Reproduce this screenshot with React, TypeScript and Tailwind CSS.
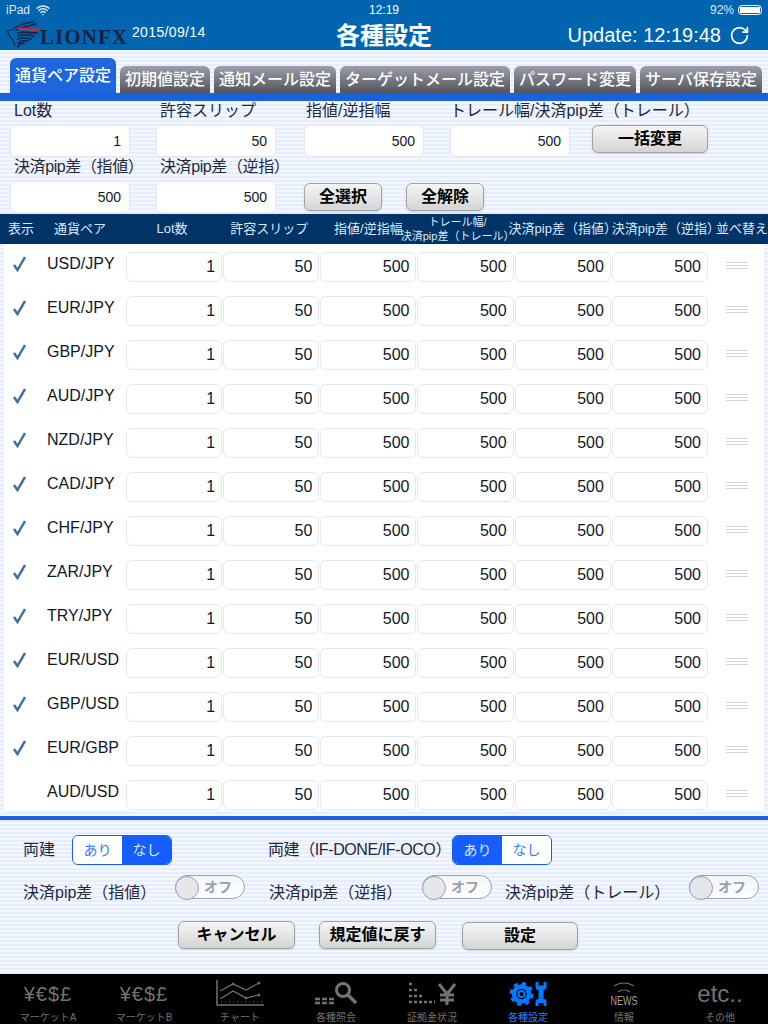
import type React from "react"
import { RotateCw, Wifi } from "lucide-react"

const stripes =
  "bg-[repeating-linear-gradient(180deg,#e6edff_0,#e6edff_2px,#f4f7ff_2px,#f4f7ff_4px)]"

const tabs = [
  { label: "初期値設定", width: "w-22.5" },
  { label: "通知メール設定", width: "w-30.5" },
  { label: "ターゲットメール設定", width: "w-42.5" },
  { label: "パスワード変更", width: "w-30.5" },
  { label: "サーバ保存設定", width: "w-30.5" },
]

const pairs = [
  { name: "USD/JPY", checked: true },
  { name: "EUR/JPY", checked: true },
  { name: "GBP/JPY", checked: true },
  { name: "AUD/JPY", checked: true },
  { name: "NZD/JPY", checked: true },
  { name: "CAD/JPY", checked: true },
  { name: "CHF/JPY", checked: true },
  { name: "ZAR/JPY", checked: true },
  { name: "TRY/JPY", checked: true },
  { name: "EUR/USD", checked: true },
  { name: "GBP/USD", checked: true },
  { name: "EUR/GBP", checked: true },
  { name: "AUD/USD", checked: false },
]

const rowValues = ["1", "50", "500", "500", "500", "500"]

function LionLogo() {
  return (
    <svg width="34" height="27" viewBox="0 0 34 27" fill="none" strokeLinecap="round" className="-mt-0.5 shrink-0">
      <path d="M8 7C14 3 20 2 27 1" stroke="#14233f" strokeWidth="1.5" />
      <path d="M10 9C16 6 22 5 30 3" stroke="#14233f" strokeWidth="1.5" />
      <path d="M13 8C20 6 26 11 33 8" stroke="#d8232a" strokeWidth="2.2" />
      <path d="M1 10L8 8M1 10C3 15 5 17 7 19M7 19L9 25" stroke="#14233f" strokeWidth="1.2" />
      <path d="M12 12C18 10 24 12 31 12" stroke="#14233f" strokeWidth="1.7" />
      <path d="M12 15C17 13 22 14 28 15" stroke="#14233f" strokeWidth="1.7" />
      <path d="M12 18C16 16 20 17 25 18" stroke="#14233f" strokeWidth="1.7" />
      <path d="M12 22C15 19 18 19 22 20" stroke="#14233f" strokeWidth="1.7" />
      <path d="M12 26C13 23 15 22 18 22" stroke="#14233f" strokeWidth="1.7" />
    </svg>
  )
}

function GelButton({ label, className }: { label: string; className: string }) {
  return (
    <button
      className={`flex h-7 items-center justify-center rounded-md border border-neutral-400 bg-gradient-to-b from-neutral-100 via-neutral-200 to-neutral-300 text-base font-bold text-black shadow-sm ${className}`}
    >
      {label}
    </button>
  )
}

function Field({ label, value, labelClass = "" }: { label: string; value: string; labelClass?: string }) {
  return (
    <div className="w-30">
      <div className={`h-6 whitespace-nowrap text-base leading-5 text-gray-800 ${labelClass}`}>{label}</div>
      <input
        readOnly
        value={value}
        className="h-8 w-full rounded-md border border-gray-200 bg-white px-2 text-right text-sm text-gray-900"
      />
    </div>
  )
}

function Segment({ active }: { active: "left" | "right" }) {
  const on = "bg-blue-600 text-blue-100"
  const off = "bg-white text-blue-500"
  return (
    <div className="flex h-7.5 w-25 overflow-hidden rounded-md border border-blue-600 text-sm">
      <div className={`flex flex-1 items-center justify-center ${active === "left" ? on : off}`}>あり</div>
      <div className={`flex flex-1 items-center justify-center ${active === "right" ? on : off}`}>なし</div>
    </div>
  )
}

function Toggle() {
  return (
    <div className="relative flex h-6 w-17.5 items-center justify-end rounded-full border border-gray-400 bg-gradient-to-b from-gray-100 to-white pr-3">
      <span className="text-sm font-bold leading-none text-gray-400">オフ</span>
      <span className="absolute -left-px top-0 size-6 rounded-full border border-gray-400 bg-gray-200" />
    </div>
  )
}

function ChartIcon() {
  return (
    <svg width="48" height="27" viewBox="0 0 48 27" fill="none" stroke="#737373">
      <path d="M1 0V25H48" strokeWidth="1.5" />
      <path d="M1 22H48" strokeWidth="1" strokeDasharray="1 3" />
      <path d="M4 11L17 4L30 10L43 3" strokeWidth="1.2" />
      <path d="M4 19L17 11L30 18L43 15" strokeWidth="1.2" />
      <circle cx="17" cy="4" r="1" fill="#737373" />
      <circle cx="43" cy="3" r="1" fill="#737373" />
      <circle cx="30" cy="18" r="1" fill="#737373" />
      <circle cx="43" cy="15" r="1" fill="#737373" />
    </svg>
  )
}

function SearchIcon() {
  return (
    <svg width="44" height="24" viewBox="0 0 44 24" fill="none">
      <circle cx="29" cy="8" r="6.5" stroke="#737373" strokeWidth="3" />
      <path d="M34 13L42 21" stroke="#737373" strokeWidth="3.5" />
      <path d="M1 17H20M1 21H20" stroke="#737373" strokeWidth="2.5" strokeDasharray="5 2" />
    </svg>
  )
}

function MarginIcon() {
  return (
    <svg width="48" height="24" viewBox="0 0 48 24" fill="none" stroke="#737373">
      <path d="M1 2H5M1 8H11M1 14H16M1 20H27" strokeWidth="2.5" strokeDasharray="3 2" />
      <path d="M31 2L39 12L47 2M39 12V23M32 13H46M32 18H46" strokeWidth="3" />
    </svg>
  )
}

function SettingsIcon() {
  return (
    <svg width="38" height="26" viewBox="0 0 38 26" fill="#007aff">
      <circle cx="12.500" cy="13" r="10" fill="none" stroke="#007aff" strokeWidth="4" strokeDasharray="4 3.850" />
      <circle cx="12.500" cy="13" r="7.500" fill="none" stroke="#007aff" strokeWidth="4.500" />
      <circle cx="12.500" cy="13" r="3" fill="none" stroke="#007aff" strokeWidth="2" />
      <path d="M26.500 1L29.500 1V4.500H34.500V1H37.500V6Q37.500 9 34.500 9V18Q37.500 18 37.500 21V25H34.500V22H29.500V25H26.500V21Q26.500 18 29.500 18V9Q26.500 9 26.500 6Z" />
    </svg>
  )
}

function NewsIcon() {
  return (
    <div className="flex flex-col items-center">
      <svg width="26" height="14" viewBox="0 0 26 14" fill="none" stroke="#737373" strokeWidth="1.2">
        <path d="M3 5Q13 -1 23 5" />
        <path d="M7 11Q13 7 19 11" />
      </svg>
      <span className="scale-x-75 text-xs leading-3 text-neutral-400">NEWS</span>
    </div>
  )
}

function NavItem({ icon, label, active }: { icon: React.ReactNode; label: string; active?: boolean }) {
  return (
    <div className="flex flex-1 flex-col items-center">
      <div className="flex h-9.5 items-center justify-center">{icon}</div>
      <span className={`whitespace-nowrap text-[10px] leading-3 ${active ? "text-blue-500" : "text-neutral-500"}`}>
        {label}
      </span>
    </div>
  )
}

const currencies = <span className="text-xl tracking-wider text-neutral-500">¥€$£</span>

export default function App() {
  return (
    <div
      className={`flex h-screen flex-col overflow-hidden ${stripes}`}
      style={{ fontFamily: '"Liberation Sans", "Noto Sans CJK JP", sans-serif' }}
    >
      {/* header */}
      <header className="h-12.5 shrink-0 bg-[#0065ae] text-white">
        <div className="grid h-5 grid-cols-3 items-center px-1.5 text-xs">
          <div className="flex items-center gap-1.5 text-blue-100">
            iPad <Wifi size={14} strokeWidth={2.5} />
          </div>
          <div className="text-center">12:19</div>
          <div className="flex items-center justify-end gap-1 text-blue-100">
            92%
            <span className="flex h-2.5 w-6 items-center rounded-sm border border-white p-px">
              <span className="h-full w-5 bg-white" />
            </span>
          </div>
        </div>
        <div className="relative flex h-7.5 items-center pl-1.5">
          <LionLogo />
          <span
            className="mt-1 text-[21px] font-bold leading-none tracking-wider text-[#14233f]"
            style={{ fontFamily: '"Liberation Serif", serif' }}
          >
            LIONFX
          </span>
          <span className="mb-1.5 ml-1 text-sm tracking-wide">2015/09/14</span>
          <span className="absolute inset-x-0 top-0 text-center text-2xl font-semibold">各種設定</span>
          <span className="ml-auto text-xl">Update: 12:19:48</span>
          <RotateCw size={21} className="ml-2 mr-4.5" />
        </div>
      </header>

      {/* tabs */}
      <div className="flex h-11 shrink-0 items-end gap-1 pl-2.5">
        <div className="flex h-9 w-26.5 items-start justify-center rounded-t-md bg-[#1f66dd] pt-1.5 text-base font-medium text-white">
          通貨ペア設定
        </div>
        {tabs.map((tab) => (
          <div
            key={tab.label}
            className={`flex h-7 items-center justify-center whitespace-nowrap rounded-t-md bg-gradient-to-b from-zinc-400 to-zinc-600 text-base font-medium text-white ${tab.width}`}
          >
            {tab.label}
          </div>
        ))}
      </div>
      <div className="relative -mt-px h-2 shrink-0 bg-[#1a62dd]" />

      {/* bulk edit */}
      <section className="shrink-0 pb-px pl-2.5">
        <div className="flex items-start">
          <Field label="Lot数" value="1" labelClass="pl-1" />
          <div className="ml-6.5">
            <Field label="許容スリップ" value="50" labelClass="pl-1" />
          </div>
          <div className="ml-7">
            <Field label="指値/逆指幅" value="500" labelClass="pl-0.5" />
          </div>
          <div className="ml-6.5">
            <Field label="トレール幅/決済pip差（トレール）" value="500" />
          </div>
          <GelButton label="一括変更" className="ml-5.5 mt-6 w-29" />
        </div>
        <div className="flex items-end">
          <Field label="決済pip差（指値）" value="500" labelClass="pl-1 tracking-tight" />
          <div className="ml-6.5">
            <Field label="決済pip差（逆指）" value="500" labelClass="pl-1 tracking-tight" />
          </div>
          <GelButton label="全選択" className="mb-0.5 ml-7 w-19.5" />
          <GelButton label="全解除" className="mb-0.5 ml-6 w-19.5" />
        </div>
      </section>

      {/* table head */}
      <div className="flex h-7.5 shrink-0 items-center whitespace-nowrap bg-[#003366] text-[13px] text-blue-100">
        <span className="w-13.5 pl-2">表示</span>
        <span className="w-18">通貨ペア</span>
        <div className="grid w-145.5 grid-cols-6 items-center gap-px">
          <span className="-translate-x-0.5 text-center">Lot数</span>
          <span className="-translate-x-0.5 text-center">許容スリップ</span>
          <span className="text-center">指値/逆指幅</span>
          <span className="flex -translate-x-2 flex-col items-center text-[11px] leading-3.5">
            <span>トレール幅/</span>
            <span>決済pip差（トレール）</span>
          </span>
          <span className="flex justify-center">決済pip差（指値）</span>
          <span className="flex translate-x-1.5 justify-center">決済pip差（逆指）</span>
        </div>
        <span className="pl-2">並べ替え</span>
      </div>

      {/* rows */}
      <div className="mx-1 mb-1.5 min-h-0 flex-1 overflow-hidden bg-white">
        {pairs.map((pair) => (
          <div key={pair.name} className="flex h-11 items-start pt-2">
            <div className="mt-1 w-10.75 pl-2">
              {pair.checked && (
                <svg width="14" height="16" viewBox="0 0 14 16" fill="none" stroke="#3f6f9f" strokeWidth="2.500">
                  <path d="M2 9L5.500 14L13 1" />
                </svg>
              )}
            </div>
            <div className="mt-0.5 w-19.75 text-base leading-5 text-gray-900">{pair.name}</div>
            <div className="grid w-145.5 grid-cols-6 gap-px">
              {rowValues.map((value, i) => (
                <input
                  key={i}
                  readOnly
                  value={value}
                  className="h-7.5 w-full rounded-md border border-gray-200 bg-white px-1.5 text-right text-base text-gray-900"
                />
              ))}
            </div>
            <div className="ml-4.5 mt-2.5 flex w-5.5 flex-col gap-0.5">
              <span className="h-px bg-gray-300" />
              <span className="h-px bg-gray-300" />
              <span className="h-px bg-gray-300" />
            </div>
          </div>
        ))}
      </div>

      {/* bottom panel */}
      <div className="h-1 shrink-0 bg-[#1a62dd]" />
      <section className="h-38.5 shrink-0 pt-3.75 text-base text-gray-800">
        <div className="flex items-center pl-5.75">
          <span className="w-12.25">両建</span>
          <Segment active="right" />
          <span className="ml-24 w-46 whitespace-nowrap tracking-tight">両建（IF-DONE/IF-OCO）</span>
          <Segment active="left" />
        </div>
        <div className="mt-2.5 flex items-start whitespace-nowrap pl-5.75">
          <span className="mt-1.5 w-38">決済pip差（指値）</span>
          <Toggle />
          <span className="ml-6 mt-1.5 w-38.25">決済pip差（逆指）</span>
          <Toggle />
          <span className="ml-3.25 mt-1.5 w-46">決済pip差（トレール）</span>
          <Toggle />
        </div>
        <div className="mt-4 flex items-start pl-44.5">
          <GelButton label="キャンセル" className="w-29.25" />
          <GelButton label="規定値に戻す" className="ml-6 w-29.25" />
          <GelButton label="設定" className="ml-6.5 mt-px w-29" />
        </div>
      </section>

      {/* nav */}
      <nav className="flex h-12.5 shrink-0 bg-black pt-px">
        <NavItem icon={currencies} label="マーケットA" />
        <NavItem icon={currencies} label="マーケットB" />
        <NavItem icon={<ChartIcon />} label="チャート" />
        <NavItem icon={<SearchIcon />} label="各種照会" />
        <NavItem icon={<MarginIcon />} label="証拠金状況" />
        <NavItem icon={<SettingsIcon />} label="各種設定" active />
        <NavItem icon={<NewsIcon />} label="情報" />
        <NavItem icon={<span className="text-2xl text-neutral-500">etc..</span>} label="その他" />
      </nav>
    </div>
  )
}
